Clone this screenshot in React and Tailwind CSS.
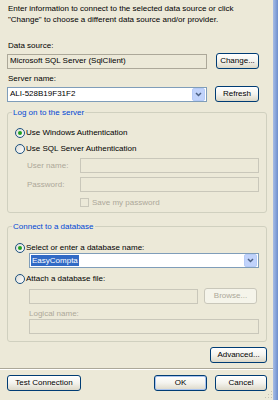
const font = { fontFamily: '"Liberation Sans", Arial, sans-serif' }

function XpButton({ children, className = '', disabled, primary }) {
  return (
    <div
      className={`h-[16px] flex items-center justify-center rounded-[3px] border text-[8px] leading-none ${
        disabled
          ? 'border-[#c9c7ba] bg-[#f5f4ea] text-[#aca899]'
          : 'border-[#003c74] bg-gradient-to-b from-white via-[#f4f3ee] to-[#dcd8c8] text-black'
      } ${primary ? 'shadow-[inset_0_0_0_1px_#a9c3ee]' : ''} ${className}`}
    >
      {children}
    </div>
  )
}

function Radio({ checked, label }) {
  return (
    <div className="flex items-center h-[11px] leading-[11px] ml-[7px]">
      <span className="w-[10px] h-[10px] rounded-full border border-[#1c5180] bg-gradient-to-br from-[#dcdcd6] to-white flex items-center justify-center">
        {checked && <span className="w-[4px] h-[4px] rounded-full bg-[#21a121]" />}
      </span>
      <span className="ml-[1px]">{label}</span>
    </div>
  )
}

function ComboArrow() {
  return (
    <div className="w-[13px] h-[13px] mr-[1px] rounded-[2px] bg-[#c1d3fb] border border-[#b6cbf7] flex items-center justify-center">
      <svg width="7" height="5" viewBox="0 0 7 5">
        <path d="M1 1 L3.5 3.5 L6 1" stroke="#4d6185" strokeWidth="1.5" fill="none" />
      </svg>
    </div>
  )
}

function Legend({ children }) {
  return <legend className="ml-[4px] px-[1px] text-[#0046d5] leading-[11px]">{children}</legend>
}

export default function App() {
  return (
    <div className="w-[278px] h-[400px] bg-[#ece9d8] flex text-[8px] text-black overflow-hidden" style={font}>
      <div className="w-[273px] h-full pl-[7px] pt-[3px] relative">
        {/* Intro */}
        <p className="leading-[11px] pl-[1px]">
          Enter information to connect to the selected data source or click
          <br />
          "Change" to choose a different data source and/or provider.
        </p>

        {/* Data source */}
        <div className="mt-[15px] leading-[11px] pl-[1px]">Data source:</div>
        <div className="mt-[2px] flex items-center">
          <div className="w-[200px] h-[15px] border border-[#aca899] bg-[#ece9d8] flex items-center pl-[2px]">
            Microsoft SQL Server (SqlClient)
          </div>
          <XpButton className="ml-[9px] w-[43px]">Change...</XpButton>
        </div>

        {/* Server name */}
        <div className="mt-[4px] leading-[11px] pl-[1px]">Server name:</div>
        <div className="mt-[2px] flex items-center">
          <div className="w-[200px] h-[15px] border border-[#7f9db9] bg-white flex items-center justify-between pl-[2px]">
            <span>ALI-528B19F31F2</span>
            <ComboArrow />
          </div>
          <XpButton className="ml-[8px] w-[44px]">Refresh</XpButton>
        </div>

        {/* Log on group */}
        <fieldset className="mt-[5px] w-[260px] border border-[#d0d0bf] rounded-[3px] pb-[4px]">
          <Legend>Log on to the server</Legend>
          <div className="mt-[9px]">
            <Radio checked label="Use Windows Authentication" />
          </div>
          <div className="mt-[5px]">
            <Radio label="Use SQL Server Authentication" />
          </div>
          <div className="mt-[4px] flex items-center text-[#aca899]">
            <span className="w-[72px] pl-[19px]">User name:</span>
            <div className="w-[179px] h-[15px] border border-[#c9c7ba]" />
          </div>
          <div className="mt-[4px] flex items-center text-[#aca899]">
            <span className="w-[72px] pl-[19px]">Password:</span>
            <div className="w-[179px] h-[15px] border border-[#c9c7ba]" />
          </div>
          <div className="mt-[5px] h-[11px] flex items-center text-[#aca899] pl-[72px]">
            <span className="w-[9px] h-[9px] border border-[#c9c7ba]" />
            <span className="ml-[3px]">Save my password</span>
          </div>
        </fieldset>

        {/* Connect group */}
        <fieldset className="mt-[8px] w-[260px] border border-[#d0d0bf] rounded-[3px] pb-[7px]">
          <Legend>Connect to a database</Legend>
          <div className="mt-[10px]">
            <Radio checked label="Select or enter a database name:" />
          </div>
          <div className="ml-[21px] w-[230px] h-[15px] border border-[#7f9db9] bg-white flex items-center justify-between pl-[1px]">
            <span className="bg-[#316ac5] text-white px-[1px] leading-[11px]">EasyCompta</span>
            <ComboArrow />
          </div>
          <div className="mt-[5px]">
            <Radio label="Attach a database file:" />
          </div>
          <div className="mt-[4px] ml-[21px] flex items-center">
            <div className="w-[169px] h-[15px] border border-[#c9c7ba]" />
            <XpButton disabled className="ml-[6px] w-[53px] h-[15px]">Browse...</XpButton>
          </div>
          <div className="mt-[4px] ml-[21px] leading-[11px] text-[#aca899]">Logical name:</div>
          <div className="ml-[21px] w-[230px] h-[15px] border border-[#c9c7ba]" />
        </fieldset>

        {/* Advanced */}
        <div className="mt-[5px] w-[260px] flex justify-end">
          <XpButton className="w-[57px]">Advanced...</XpButton>
        </div>

        {/* Separator */}
        <div className="mt-[5px] -ml-[7px] w-[273px] border-t border-[#aca899] border-b border-b-white" />

        {/* Bottom buttons */}
        <div className="mt-[5px] w-[260px] flex items-center">
          <XpButton className="w-[74px]">Test Connection</XpButton>
          <div className="flex-1" />
          <XpButton primary className="w-[53px]">OK</XpButton>
          <XpButton className="ml-[8px] w-[52px]">Cancel</XpButton>
        </div>

        {/* Resize grip */}
        <svg className="absolute right-0 bottom-[1px]" width="8" height="8" viewBox="0 0 8 8">
          <rect x="6" y="0" width="1" height="1" fill="#c3c1b5" />
          <rect x="3" y="3" width="1" height="1" fill="#c3c1b5" />
          <rect x="6" y="3" width="1" height="1" fill="#c3c1b5" />
          <rect x="0" y="6" width="1" height="1" fill="#c3c1b5" />
          <rect x="3" y="6" width="1" height="1" fill="#c3c1b5" />
          <rect x="6" y="6" width="1" height="1" fill="#c3c1b5" />
        </svg>
      </div>
      <div className="w-[5px] h-full bg-gradient-to-r from-[#a7bde6] to-[#6e8fcc]" />
    </div>
  )
}
